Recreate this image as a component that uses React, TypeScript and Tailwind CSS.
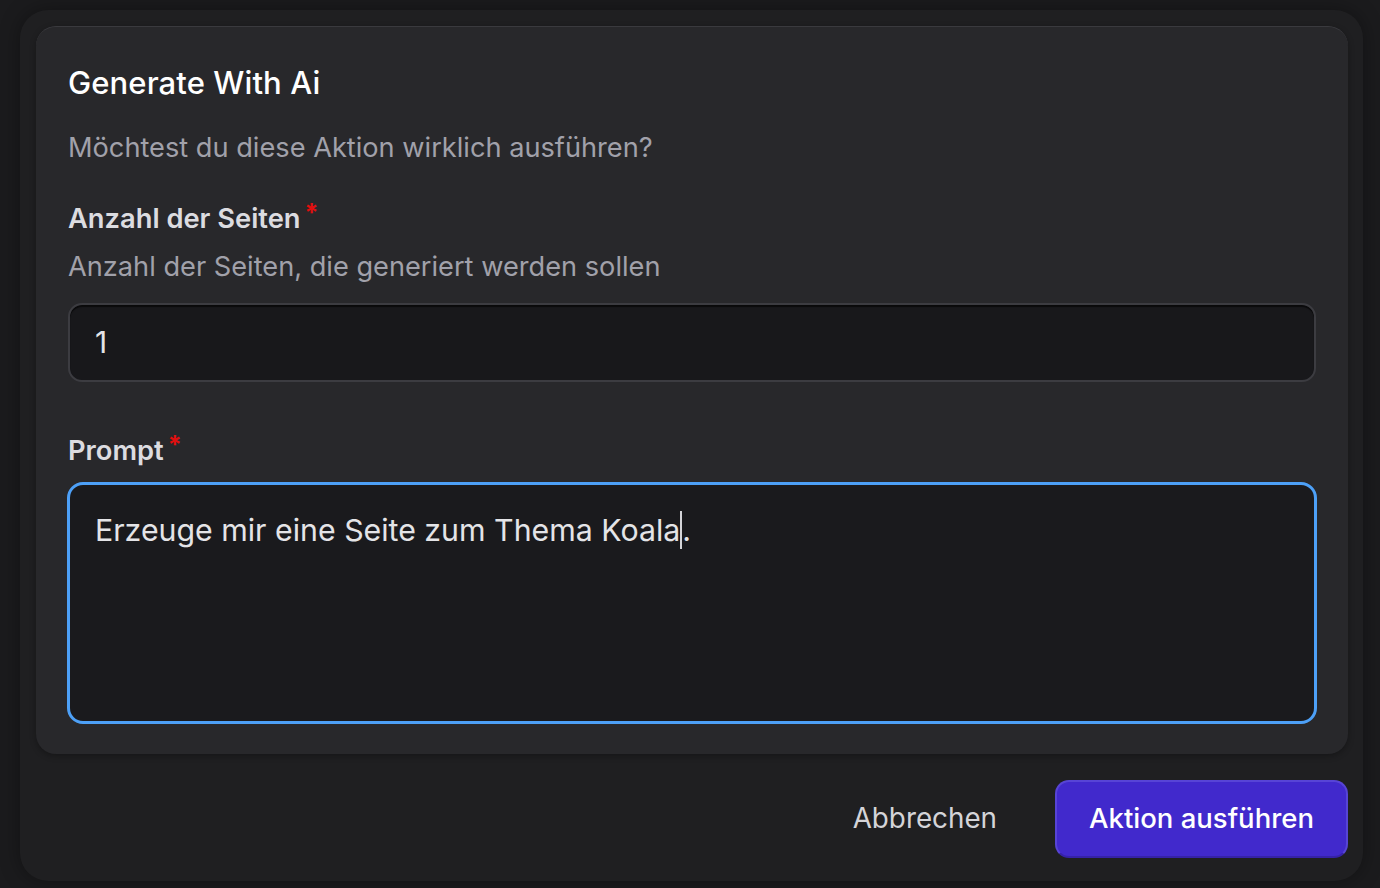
import React from "react";

function Req() {
  return (
    <span className="ml-[4px] text-[25px] leading-[22px] font-bold text-[#e00f0f] relative top-[1px]">*</span>
  );
}

export default function App() {
  return (
    <div className="w-[1380px] h-[888px] bg-[#1b1b1d] pt-[10px] pl-[20px] pr-[17px] pb-[7px] overflow-hidden font-['Inter',sans-serif]">
      <div className="h-full rounded-[28px] bg-[#1f1f21] pt-[16px] pl-[16px] pr-[15px] pb-[24px] flex flex-col shadow-[0_0_20px_rgba(0,0,0,0.35)]">
        <div className="rounded-[20px] bg-[#28282b] px-[32px] pt-[36px] pb-[30px] flex flex-col border-t border-[#3a3a3e] shadow-[0_2px_6px_rgba(0,0,0,0.3)]">
          <div className="text-[31px] leading-[40px] font-medium text-white tracking-[0.1px]">Generate With Ai</div>
          <div className="mt-[27px] text-[27.2px] leading-[36px] text-[#a1a1aa]">Möchtest du diese Aktion wirklich ausführen?</div>

          <div className="mt-[35px] text-[27.3px] leading-[36px] font-semibold text-[#dcdce0] flex items-start">
            <span>Anzahl der Seiten</span>
            <Req />
          </div>
          <div className="mt-[12px] text-[27.2px] leading-[36px] text-[#a1a1aa]">Anzahl der Seiten, die generiert werden sollen</div>
          <div className="mt-[18px] h-[79px] rounded-[14px] bg-[#18181b] border-[2px] border-[#3c3c41] shadow-[inset_0_2px_1px_rgba(0,0,0,0.6)] flex items-center pl-[25px] text-[30px] text-[#e4e4e7]">
            1
          </div>

          <div className="mt-[51px] text-[27.3px] leading-[36px] font-semibold text-[#dcdce0] flex items-start">
            <span>Prompt</span>
            <Req />
          </div>
          <div className="mt-[13px] -mx-[1px] h-[242px] rounded-[16px] bg-[#1a1a1d] border-[3px] border-[#4da0f7] pl-[25px] pt-[27px] text-[30.3px] leading-[36px] text-[#e4e4e7]">
            Erzeuge mir eine Seite zum Thema Koala
            <span className="inline-block w-[2px] h-[38px] bg-[#d4d4d8] align-top -mt-[1px]"></span>.
          </div>
        </div>

        <div className="mt-[26px] flex items-center justify-end gap-[58px]">
          <span className="text-[27.8px] text-[#d4d4d8]">Abbrechen</span>
          <div className="h-[78px] px-[32px] flex items-center rounded-[14px] bg-[#4129cc] border-[2px] border-[#5744d6] border-b-[#3622a8] text-[27.5px] font-medium text-white">
            Aktion ausführen
          </div>
        </div>
      </div>
    </div>
  );
}
